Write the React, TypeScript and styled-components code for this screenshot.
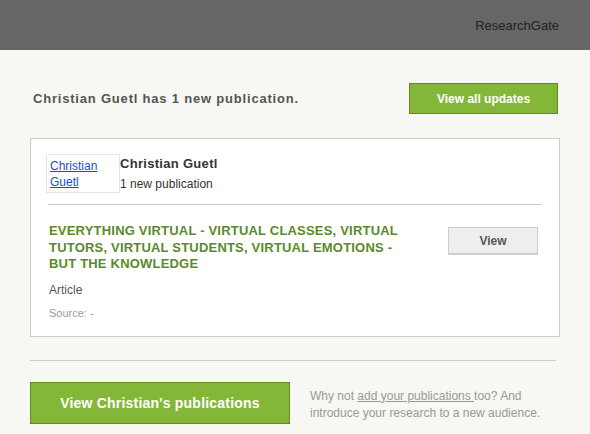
import React from 'react';
import styled, { createGlobalStyle } from 'styled-components';

const GlobalStyle = createGlobalStyle`
	html, body {
		margin: 0;
		padding: 0;
		background: #f7f7f3;
		font-family: "Liberation Sans", Arial, sans-serif;
	}
`;

const App = () => {
	return (
		<>
			<GlobalStyle />
			<Header>
				<Brand>ResearchGate</Brand>
			</Header>
			<Body>
				<Intro>
					<Headline>Christian Guetl has 1 new publication.</Headline>
					<GreenButton href="#">View all updates</GreenButton>
				</Intro>

				<Card>
					<AuthorRow>
						<Avatar>
							<AvatarLink href="#">Christian Guetl</AvatarLink>
						</Avatar>
						<AuthorInfo>
							<AuthorName>Christian Guetl</AuthorName>
							<AuthorMeta>1 new publication</AuthorMeta>
						</AuthorInfo>
					</AuthorRow>

					<PubRow>
						<PubInfo>
							<PubTitle href="#">
								Everything virtual - virtual classes, virtual tutors, virtual students, virtual emotions - but the knowledge
							</PubTitle>
							<PubType>Article</PubType>
							<PubSource>Source: -</PubSource>
						</PubInfo>
						<GreyButton href="#">View</GreyButton>
					</PubRow>
				</Card>

				<Rule />

				<Footer>
					<GreenButton href="#" $large>View Christian's publications</GreenButton>
					<Hint>
						Why not <HintLink href="#">add your publications </HintLink>too? And introduce your research to a new audience.
					</Hint>
				</Footer>
			</Body>
		</>
	);
};

export default App;

const Header = styled.div`
	height: 50px;
	background: #666666;
	display: flex;
	align-items: center;
	justify-content: flex-end;
	padding: 0 31px;
`;

const Brand = styled.span`
	font-size: 13px;
	color: #222222;
	margin-top: 1px;
`;

const Body = styled.div`
	padding: 33px 30px 0 30px;
`;

const Intro = styled.div`
	display: flex;
	align-items: center;
	justify-content: space-between;
	padding: 0 2px 0 3px;
	margin-bottom: 24px;
`;

const Headline = styled.h1`
	margin: 0;
	font-size: 13px;
	font-weight: bold;
	color: #555555;
	letter-spacing: 0.8px;
`;

const GreenButton = styled.a<{ $large?: boolean }>`
	display: flex;
	align-items: center;
	justify-content: center;
	box-sizing: border-box;
	width: ${(props) => (props.$large ? '260px' : '149px')};
	height: ${(props) => (props.$large ? '42px' : '31px')};
	background: #84b737;
	border: 1px solid #5c8b19;
	box-shadow: ${(props) => (props.$large ? '0 2px 0 #dcdcd8' : 'none')};
	color: #ffffff;
	font-size: ${(props) => (props.$large ? '14px' : '12px')};
	font-weight: bold;
	letter-spacing: ${(props) => (props.$large ? '0.2px' : '0')};
	text-decoration: none;
	flex-shrink: 0;
`;

const Card = styled.div`
	background: #ffffff;
	border: 1px solid #cccccc;
	padding: 15px 17px 17px 16px;
`;

const AuthorRow = styled.div`
	display: flex;
	align-items: flex-start;
	padding-bottom: 10px;
	border-bottom: 1px solid #cccccc;
	margin-left: 1px;
`;

const Avatar = styled.div`
	box-sizing: border-box;
	width: 74px;
	height: 39px;
	margin-left: -2px;
	border: 1px solid #e4e4e4;
	padding: 3px 0 0 3px;
	flex-shrink: 0;
`;

const AvatarLink = styled.a`
	font-size: 12px;
	line-height: 16px;
	color: #1a4fd0;
	text-decoration: underline;
	display: block;
	width: 60px;
`;

const AuthorInfo = styled.div`
	display: flex;
	flex-direction: column;
	padding-top: 1px;
`;

const AuthorName = styled.span`
	font-size: 13px;
	font-weight: bold;
	color: #333333;
	line-height: 17px;
	letter-spacing: 0.3px;
`;

const AuthorMeta = styled.span`
	font-size: 12px;
	color: #333333;
	line-height: 20px;
	margin-top: 2px;
`;

const PubRow = styled.div`
	display: flex;
	justify-content: space-between;
	align-items: flex-start;
	padding-top: 18px;
	padding-left: 2px;
`;

const PubInfo = styled.div`
	display: flex;
	flex-direction: column;
	width: 370px;
`;

const PubTitle = styled.a`
	font-size: 13px;
	font-weight: bold;
	line-height: 16.5px;
	color: #5b8a2a;
	text-transform: uppercase;
	text-decoration: none;
	letter-spacing: 0.2px;
`;

const PubType = styled.span`
	font-size: 12px;
	color: #555555;
	margin-top: 10px;
`;

const PubSource = styled.span`
	font-size: 11px;
	color: #999999;
	margin-top: 10px;
`;

const GreyButton = styled.a`
	display: flex;
	align-items: center;
	justify-content: center;
	box-sizing: border-box;
	width: 90px;
	height: 28px;
	margin: 4px 4px 0 0;
	background: #eeeeee;
	border: 1px solid #cccccc;
	border-bottom-width: 2px;
	color: #555555;
	font-size: 12px;
	font-weight: bold;
	text-decoration: none;
`;

const Rule = styled.hr`
	margin: 23px 4px 21px 0;
	border: none;
	border-top: 1px solid #cccccc;
`;

const Footer = styled.div`
	display: flex;
	align-items: center;
	gap: 20px;
`;

const Hint = styled.p`
	margin: 4px 0 0 0;
	width: 250px;
	font-size: 12px;
	line-height: 17px;
	color: #999999;
`;

const HintLink = styled.a`
	color: #999999;
	text-decoration: underline;
`;
